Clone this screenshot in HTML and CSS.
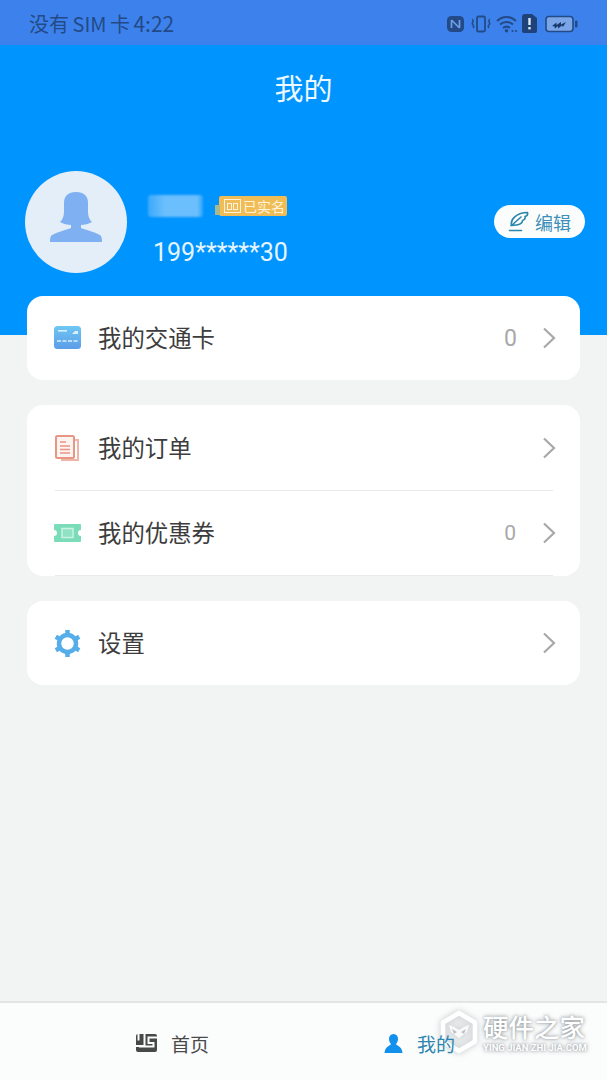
FILE: index.html
```html
<!DOCTYPE html>
<html lang="zh">
<head>
<meta charset="utf-8">
<title>我的</title>
<link rel="stylesheet" href="styles.css">
</head>
<body>
<div class="app">
  <div class="status">
    <span class="status-text">没有 SIM 卡 <span class="status-time">4:22</span></span>
    <div class="status-icons">
      <svg width="23" height="18" viewBox="0 0 23 18"><rect x="0" y="1" width="17" height="16" rx="4.500" fill="#234a86"/><path d="M4.500 5v8M12.500 5v8M4.500 5l8 8" stroke="#6f9fe8" stroke-width="1.700" fill="none"/></svg>
      <svg width="26" height="18" viewBox="0 0 26 18"><rect x="7" y="1.500" width="8" height="15" rx="1.500" fill="none" stroke="#234a86" stroke-width="1.800"/><path d="M3 4c-1.500 1 1 2 0 3s-1 2 0 3 1 2 0 3M19 4c1.500 1-1 2 0 3s1 2 0 3-1 2 0 3" stroke="#234a86" stroke-width="1.500" fill="none"/></svg>
      <svg width="26" height="18" viewBox="0 0 26 18"><path d="M1 6c5.500-5.500 13.500-5.500 19 0M4 9.500c3.800-3.400 9.200-3.400 13 0M7 13c2.200-1.700 4.800-1.700 7 0" stroke="#234a86" stroke-width="2" fill="none"/><circle cx="10.500" cy="15.800" r="1.800" fill="#234a86"/><circle cx="16.500" cy="16" r="1.100" fill="#234a86"/><circle cx="20" cy="16" r="1.100" fill="#234a86"/></svg>
      <svg width="23" height="19" viewBox="0 0 23 19"><path d="M3 0h7l5 4v13a2 2 0 0 1-2 2H2a2 2 0 0 1-2-2V3a3 3 0 0 1 3-3z" fill="#1f4378"/><rect x="6.300" y="4" width="2.400" height="7" fill="#dfe8f6"/><rect x="6.300" y="13" width="2.400" height="2.400" fill="#dfe8f6"/></svg>
      <svg width="33" height="18" viewBox="0 0 33 18"><rect x="1" y="1.500" width="27" height="15" rx="3" fill="#7aa6e8" stroke="#234a86" stroke-width="1.600"/><rect x="30" y="5.500" width="2.500" height="7" rx="1" fill="#234a86"/><path d="M7 11l4.500-3.500v2.500l4.500-3v2.500l5-2.500-3 5-1-1.500-4 3v-2.500l-3 2.500-.5-2z" fill="#1a3a6e"/></svg>
    </div>
  </div>

  <header class="hero">
    <h1 class="title">我的</h1>
    <div class="profile">
      <div class="avatar">
        <svg class="avatar-figure" width="52" height="50" viewBox="0 0 52 50"><path d="M26 0c-8 0-12 4-12 11v9c0 4-1.500 8-4 10 3 2 8 3 11 3v3c-5 2-14 4-19 7-1.500 1-2 3-2 7h52c0-4-.5-6-2-7-5-3-14-5-19-7v-3c3 0 8-1 11-3-2.500-2-4-6-4-10v-9C38 4 34 0 26 0z" fill="#7fb0f2"/></svg>
      </div>
      <div class="identity">
        <div class="name-row">
          <div class="name-blur"></div>
          <div class="verified"><span class="verified-mark"><i></i><i></i></span>已实名</div>
        </div>
        <div class="phone">199******30</div>
      </div>
      <div class="edit">
        <svg width="21" height="21" viewBox="0 0 21 21"><path d="M3.500 14.500C2 8 9 1.500 19.500 1.500c.5 2-.8 3.500-2.500 4 .5 2-1 3.500-2.500 4 0 2.500-3 4.500-6 4.500-2 0-4 0-5.500.5zM3.500 14.500L13 6M1.500 19.500h12" fill="none" stroke="#2a86ab" stroke-width="1.600" stroke-linecap="round" stroke-linejoin="round"/></svg>
        <span>编辑</span>
      </div>
    </div>
  </header>

  <main class="content">
    <section class="card">
      <div class="row">
        <svg class="icon" width="27" height="24" viewBox="0 0 27 24"><defs><linearGradient id="cg" x1="0" y1="0" x2="0" y2="1"><stop offset="0" stop-color="#6fc7f3"/><stop offset="1" stop-color="#5c9ce8"/></linearGradient></defs><rect x="0" y="0" width="27" height="23" rx="3.500" fill="url(#cg)"/><rect x="4" y="4" width="9" height="1.600" fill="#d9effc"/><path d="M18 8l3-3h3v3z" fill="#d9effc"/><path d="M3 15h21" stroke="#d9effc" stroke-width="1.600" stroke-dasharray="4 1.500"/></svg>
        <span class="label">我的交通卡</span>
        <span class="count">0</span>
        <svg class="chevron" width="14" height="22" viewBox="0 0 14 22"><path d="M2 1.500l10 9.500-10 9.500" fill="none" stroke="#a8a8a8" stroke-width="2.200"/></svg>
      </div>
    </section>

    <section class="card">
      <div class="row row-line">
        <svg class="icon" width="27" height="28" viewBox="0 0 27 28"><path d="M20 6h4v20H8v-2" fill="none" stroke="#eeb5a8" stroke-width="2"/><rect x="2" y="2" width="18" height="22" rx="1.500" fill="#fdf3f0" stroke="#e79585" stroke-width="2"/><path d="M6 8h6M6 12h10M6 15.500h10M6 19h10" stroke="#e79585" stroke-width="1.600"/></svg>
        <span class="label">我的订单</span>
        <svg class="chevron" width="14" height="22" viewBox="0 0 14 22"><path d="M2 1.500l10 9.500-10 9.500" fill="none" stroke="#a8a8a8" stroke-width="2.200"/></svg>
      </div>
      <div class="row row-line">
        <svg class="icon" width="27" height="20" viewBox="0 0 27 20"><path d="M1 1h25a1 1 0 0 1 1 1v5a3 3 0 0 0 0 6v5a1 1 0 0 1-1 1H1a1 1 0 0 1-1-1v-5a3 3 0 0 0 0-6V2a1 1 0 0 1 1-1z" fill="#7adcb9"/><rect x="8" y="5.500" width="11" height="9" fill="#8fe2c6" stroke="#c9f2e2" stroke-width="1.500"/></svg>
        <span class="label">我的优惠券</span>
        <span class="count count-sm">0</span>
        <svg class="chevron" width="14" height="22" viewBox="0 0 14 22"><path d="M2 1.500l10 9.500-10 9.500" fill="none" stroke="#a8a8a8" stroke-width="2.200"/></svg>
      </div>
    </section>

    <section class="card">
      <div class="row">
        <svg class="icon" width="27" height="27" viewBox="0 0 27 27"><circle cx="13.500" cy="13.500" r="8.500" fill="none" stroke="#55aee9" stroke-width="4.500"/><g stroke="#55aee9" stroke-width="4.500"><path d="M13.500 0v5M13.500 22v5M1.800 6.700l4.400 2.500M20.800 17.800l4.400 2.500M1.800 20.300l4.400-2.500M20.800 9.200l4.400-2.500"/></g></svg>
        <span class="label">设置</span>
        <svg class="chevron" width="14" height="22" viewBox="0 0 14 22"><path d="M2 1.500l10 9.500-10 9.500" fill="none" stroke="#a8a8a8" stroke-width="2.200"/></svg>
      </div>
    </section>
  </main>

  <nav class="tabs">
    <div class="tab">
      <svg width="21" height="18" viewBox="0 0 21 18"><rect width="21" height="18" rx="2" fill="#484848"/><path d="M2.500 0v6.500M0 12h8.500V0M21 3.500h-8.500V9h5v3.500H3" fill="none" stroke="#fbfcfc" stroke-width="2"/></svg>
      <span>首页</span>
    </div>
    <div class="tab tab-active">
      <svg width="19" height="19" viewBox="0 0 19 19"><path d="M9.500 0c-3 0-4.500 2.200-4.500 5 0 2 1 4 2.200 5.300C5 12 1 13 .500 19h18c-.5-6-4.500-7-6.700-8.700C13 9 14 7 14 5c0-2.800-1.500-5-4.500-5z" fill="#1190ec"/></svg>
      <span class="tab-label">我的</span>
    </div>
  </nav>

  <div class="watermark">
    <svg class="wm-logo" width="38" height="44" viewBox="0 0 38 44"><path d="M19 3l16 9.500v19L19 41 3 31.500v-19z" fill="rgba(225,230,232,.3)" stroke="#fff" stroke-width="4.500" stroke-linejoin="round"/><path d="M9 15l5 2 5 3 5-3 5-2-2 7-8 6-8-6z" fill="rgba(255,255,255,.85)"/><path d="M12 19l5 3-3 2zM26 19l-5 3 3 2z" fill="#b9c2c6"/></svg>
    <div class="wm-text">
      <div class="wm-cn">硬件之家</div>
      <div class="wm-en">YING JIAN ZHI JIA.COM</div>
    </div>
  </div>
</div>
</body>
</html>
```

FILE: styles.css
```css
* { box-sizing: border-box; }
html, body { margin: 0; padding: 0; }
body { font-family: "Noto Sans CJK SC", "Noto Sans", sans-serif; background: #f2f4f4; }
.app { position: relative; width: 607px; height: 1080px; overflow: hidden; display: flex; flex-direction: column; background: #f2f4f4; }

.status { height: 45px; flex: none; background: #3d82ec; display: flex; align-items: center; justify-content: space-between; padding: 2px 29px 0 29px; }
.status-text { font-size: 20px; line-height: 24px; color: #234a86; word-spacing: -1px; white-space: nowrap; }
.status-time { font-size: 21px; }
.status-icons { display: flex; align-items: center; }

.hero { height: 290px; flex: none; background: #0094fe; display: flex; flex-direction: column; }
.title { margin: 20px 0 0; height: 44px; font-size: 29px; font-weight: 400; line-height: 44px; color: #eef8ff; text-align: center; }
.profile { display: flex; align-items: flex-start; margin-top: 62px; padding: 0 22px 0 25px; }
.avatar { width: 102px; height: 102px; flex: none; border-radius: 50%; background: #e3eef8; display: flex; align-items: center; justify-content: center; }
.avatar-figure { margin-bottom: 10px; }
.identity { margin-left: 21px; padding-top: 24px; }
.name-row { display: flex; align-items: center; }
.name-blur { width: 55px; height: 22px; border-radius: 3px; background: linear-gradient(90deg, #3aa9fb, #6bbffc 30%, #6bbffc 90%, #2aa2fc); filter: blur(1px); }
.verified { position: relative; margin-left: 16px; width: 68px; height: 20px; border-radius: 2px; background: #f0bc55; color: #fdf3dc; font-size: 14px; line-height: 20px; display: flex; align-items: center; padding-left: 5px; gap: 2px; }
.verified::before { content: ""; position: absolute; left: -4px; top: 9px; width: 5px; height: 10px; background: #a9b98e; filter: blur(.6px); }
.verified-mark { width: 17px; height: 14px; border: 1.500px solid #fdf3dc; flex: none; display: flex; gap: 1px; align-items: center; justify-content: center; }
.verified-mark i { width: 5px; height: 7px; border: 1px solid #fdf3dc; display: block; }
.phone { margin: 18px 0 0 5px; font-family: "Roboto", sans-serif; font-size: 25px; line-height: 36px; color: #e6f4ff; }
.edit { margin-left: auto; margin-top: 34px; width: 91px; height: 33px; border-radius: 17px; background: #fbfdfd; display: flex; align-items: center; padding-left: 14px; gap: 6px; font-size: 18px; color: #3b8fb8; }

.content { margin-top: -39px; padding: 0 27px; display: flex; flex-direction: column; gap: 25px; position: relative; }
.card { background: #fff; border-radius: 16px; overflow: hidden; }
.row { height: 84px; display: flex; align-items: center; padding: 0 24px 0 27px; margin: 0; position: relative; }
.row-line { height: 85.500px; }
.row-line::after { content: ""; position: absolute; left: 28px; right: 27px; bottom: 0; height: 1px; background: #e9ebeb; }
.icon { flex: none; }
.label { position: absolute; left: 71px; top: 50%; transform: translateY(-17px); font-size: 23.400px; line-height: 32px; color: #3d3d3d; }
.count { margin-left: auto; margin-right: 25px; font-family: "Roboto", sans-serif; font-size: 23px; color: #a8a8a8; }
.count-sm { font-size: 21px; margin-right: 26px; }
.chevron { flex: none; }
.row > .icon + .label + .chevron { margin-left: auto; }

.tabs { margin-top: auto; height: 79px; flex: none; background: #fbfcfc; border-top: 2px solid #e2e5e5; display: flex; align-items: center; justify-content: space-between; padding: 3px 152px 0 136px; }
.tab { display: flex; align-items: center; gap: 14px; font-size: 19px; color: #4a4a4a; }
.tab-active { color: #2e86b0; }
.tab-label { position: relative; z-index: 1; }

.watermark { position: absolute; left: 440px; top: 1010px; display: flex; align-items: flex-start; gap: 5px; }
.wm-logo { filter: drop-shadow(0 0 3px rgba(120,130,135,.45)); }
.wm-text { display: flex; flex-direction: column; color: #fff; text-shadow: 0 0 4px rgba(110,120,125,.75), 0 0 2px rgba(110,120,125,.5); }
.wm-cn { font-size: 25.500px; line-height: 30px; font-weight: 500; white-space: nowrap; margin-top: 1px; }
.wm-en { font-family: "Roboto", sans-serif; font-size: 9.500px; line-height: 14px; font-weight: 700; white-space: nowrap; }
```
